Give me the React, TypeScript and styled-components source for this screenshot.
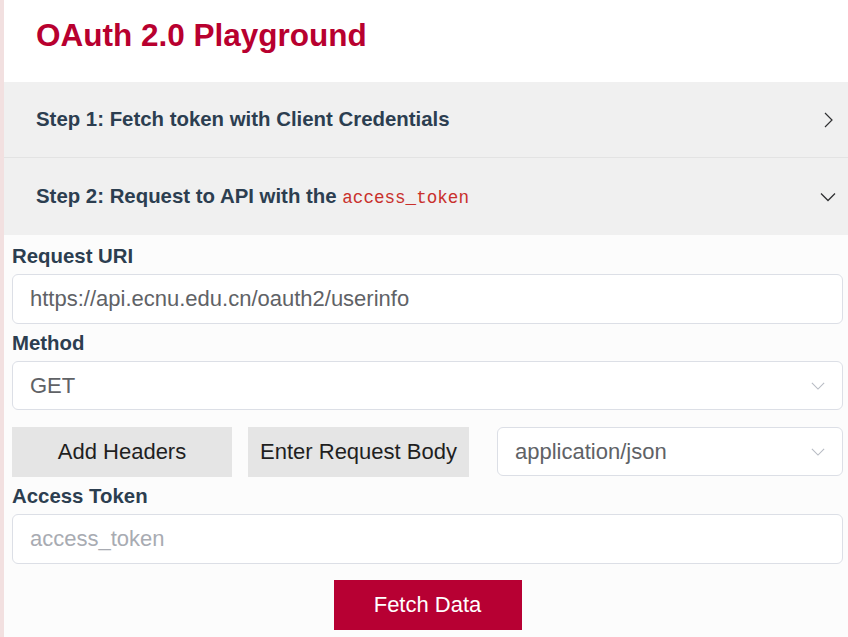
import React from 'react';
import styled, { createGlobalStyle } from 'styled-components';

const GlobalStyle = createGlobalStyle`
  html, body {
    margin: 0;
    padding: 0;
    background: #ffffff;
    font-family: "Liberation Sans", Arial, sans-serif;
  }
  * {
    box-sizing: border-box;
  }
`;

const Page = styled.div`
  min-height: 637px;
  border-left: 4px solid #f2e0e0;
  background: #fcfcfc;
`;

const Title = styled.h1`
  margin: 0;
  padding: 17px 32px 29px;
  background: #ffffff;
  color: #b8002f;
  font-size: 31.5px;
  line-height: 36px;
  font-weight: 700;
`;

const StepHeader = styled.div<{ $height: number; $divider?: boolean }>`
  display: flex;
  align-items: center;
  justify-content: space-between;
  height: ${(p) => p.$height}px;
  padding: 0 12px 0 32px;
  background: #f0f0f0;
  border-bottom: ${(p) => (p.$divider ? '1px solid #e3e3e3' : 'none')};
  color: #2c3e50;
  font-size: 20.4px;
  font-weight: 700;
  box-sizing: content-box;
`;

const Code = styled.code`
  font-family: "Liberation Mono", "Courier New", monospace;
  font-size: 17.6px;
  font-weight: 400;
  color: #c9302c;
`;

const Body = styled.div`
  padding: 2px 5px 7px 8px;
`;

const Label = styled.label`
  display: block;
  margin: 7px 0 6px;
  color: #2c3e50;
  font-size: 20.4px;
  line-height: 24px;
  font-weight: 700;
`;

const TextInput = styled.input`
  display: block;
  width: 100%;
  height: 50px;
  padding: 0 17px;
  border: 1px solid #dcdfe6;
  border-radius: 6px;
  background: #ffffff;
  color: #606266;
  font-family: "Liberation Sans", Arial, sans-serif;
  font-size: 22px;
  outline: none;

  &::placeholder {
    color: #a8abb2;
  }
`;

const SelectBox = styled.div<{ $grow?: boolean; $height?: number }>`
  display: flex;
  align-items: center;
  justify-content: space-between;
  flex: ${(p) => (p.$grow ? 1 : 'none')};
  height: ${(p) => p.$height ?? 49}px;
  padding: 0 17px 0 17px;
  border: 1px solid #dcdfe6;
  border-radius: 6px;
  background: #ffffff;
  color: #606266;
  font-size: 22px;
`;

const ActionRow = styled.div`
  display: flex;
  align-items: stretch;
  margin-top: 17px;
  height: 50px;
`;

const GreyButton = styled.button<{ $width: number }>`
  width: ${(p) => p.$width}px;
  margin-right: 16px;
  border: none;
  background: #e5e5e5;
  color: #1f1f1f;
  font-family: "Liberation Sans", Arial, sans-serif;
  font-size: 22px;
  cursor: pointer;
`;

const RowSelect = styled(SelectBox)`
  margin-left: 12px;
`;

const SubmitWrap = styled.div`
  display: flex;
  justify-content: center;
  margin-top: 16px;
`;

const FetchButton = styled.button`
  width: 188px;
  height: 50px;
  border: none;
  background: #b70033;
  color: #ffffff;
  font-family: "Liberation Sans", Arial, sans-serif;
  font-size: 22px;
  cursor: pointer;
`;

function ChevronRight() {
  return (
    <svg width="16" height="16" viewBox="0 0 16 16" fill="none">
      <path d="M5 1 L12 8 L5 15" stroke="#303133" strokeWidth="1.2" />
    </svg>
  );
}

function ChevronDown({ color = '#303133', width = 16 }: { color?: string; width?: number }) {
  return (
    <svg width={width} height="10" viewBox="0 0 16 10" fill="none">
      <path d="M1 1.5 L8 8.5 L15 1.5" stroke={color} strokeWidth="1.3" />
    </svg>
  );
}

export default function App() {
  return (
    <Page>
      <GlobalStyle />
      <Title>OAuth 2.0 Playground</Title>
      <StepHeader $height={75} $divider>
        <span>Step 1: Fetch token with Client Credentials</span>
        <ChevronRight />
      </StepHeader>
      <StepHeader $height={77}>
        <span>
          Step 2: Request to API with the <Code>access_token</Code>
        </span>
        <ChevronDown />
      </StepHeader>
      <Body>
        <Label htmlFor="uri">Request URI</Label>
        <TextInput id="uri" readOnly value="https://api.ecnu.edu.cn/oauth2/userinfo" />
        <Label>Method</Label>
        <SelectBox>
          <span>GET</span>
          <ChevronDown color="#b8bcc4" width={14} />
        </SelectBox>
        <ActionRow>
          <GreyButton $width={220}>Add Headers</GreyButton>
          <GreyButton $width={221}>Enter Request Body</GreyButton>
          <RowSelect $grow>
            <span>application/json</span>
            <ChevronDown color="#b8bcc4" width={14} />
          </RowSelect>
        </ActionRow>
        <Label htmlFor="token">Access Token</Label>
        <TextInput id="token" placeholder="access_token" />
        <SubmitWrap>
          <FetchButton>Fetch Data</FetchButton>
        </SubmitWrap>
      </Body>
    </Page>
  );
}
